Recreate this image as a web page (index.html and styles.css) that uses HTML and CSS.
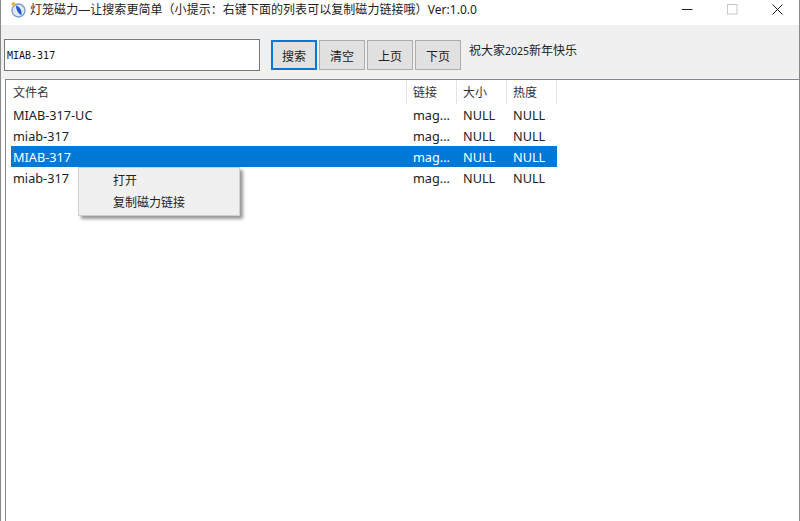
FILE: index.html
```html
<!DOCTYPE html>
<html lang="zh-CN">
<head>
<meta charset="utf-8">
<title>灯笼磁力</title>
<link rel="stylesheet" href="styles.css">
</head>
<body>
<div class="window">
  <header class="titlebar">
    <svg class="app-icon" width="18" height="18" viewBox="0 0 18 18">
      <circle cx="9.500" cy="9.500" r="6.500" fill="#dfe8f6" stroke="#7f9fd0" stroke-width="1.400"/>
      <path d="M7 4.500c3.500 1 6 4.500 5.500 9.500-3-1-5.500-5-5.500-9.500z" fill="#2456c4"/>
      <circle cx="4.500" cy="3" r="2" fill="#f0b040"/>
    </svg>
    <span class="title">灯笼磁力—让搜索更简单（小提示：右键下面的列表可以复制磁力链接哦）Ver:1.0.0</span>
    <div class="controls">
      <svg class="ctl" width="11" height="11" viewBox="0 0 11 11"><path d="M0 5.500h10.500" stroke="#222" stroke-width="1"/></svg>
      <svg class="ctl" width="11" height="11" viewBox="0 0 11 11"><rect x=".5" y=".5" width="9.500" height="9.500" fill="none" stroke="#c8c8c8"/></svg>
      <svg class="ctl" width="11" height="11" viewBox="0 0 11 11"><path d="M.5 .5l10 10M10.500 .5l-10 10" stroke="#222" stroke-width="1"/></svg>
    </div>
  </header>
  <div class="toolbar">
    <div class="search">MIAB-317</div>
    <div class="buttons">
      <button class="btn focused">搜索</button>
      <button class="btn">清空</button>
      <button class="btn">上页</button>
      <button class="btn">下页</button>
    </div>
    <span class="greeting">祝大家<span class="digits">2025</span>新年快乐</span>
  </div>
  <main class="list">
    <div class="row head">
      <span class="col name">文件名</span><span class="col">链接</span><span class="col">大小</span><span class="col">热度</span>
    </div>
    <div class="row"><span class="col name">MIAB-317-UC</span><span class="col">mag...</span><span class="col">NULL</span><span class="col">NULL</span></div>
    <div class="row"><span class="col name">miab-317</span><span class="col">mag...</span><span class="col">NULL</span><span class="col">NULL</span></div>
    <div class="row selected"><span class="col name">MIAB-317</span><span class="col">mag...</span><span class="col">NULL</span><span class="col">NULL</span></div>
    <div class="row"><span class="col name">miab-317</span><span class="col">mag...</span><span class="col">NULL</span><span class="col">NULL</span></div>
    <div class="menu">
      <div class="menu-item">打开</div>
      <div class="menu-item">复制磁力链接</div>
    </div>
  </main>
</div>
</body>
</html>
```
FILE: styles.css
```css
* { box-sizing: border-box; }
html, body { margin: 0; height: 100%; overflow: hidden; background: #fff; }
body { font-family: "Noto Sans", "Noto Sans CJK SC", sans-serif; color: #222; }
.window { height: 100vh; display: flex; flex-direction: column; border-left: 1px solid #8a8a8a; border-right: 1px solid #8a8a8a; }
.titlebar { height: 25px; flex: none; display: flex; align-items: flex-start; background: #fff; padding-left: 8px; }
.app-icon { flex: none; margin: 1px 3px 0 0; }
.title { font-size: 12px; line-height: 20px; letter-spacing: .05px; white-space: nowrap; color: #222; }
.controls { margin-left: auto; display: flex; gap: 34px; padding: 4px 16px 0 0; }
.ctl { display: block; }
.toolbar { height: 54px; flex: none; display: flex; align-items: flex-start; background: #f0f0f0; padding: 14px 0 0 3px; }
.search { width: 256px; height: 32px; background: #fff; border: 1px solid #7a7a7a; display: flex; align-items: center; padding-left: 2px; font: 10px "DejaVu Sans Mono", monospace; color: #111; }
.buttons { display: flex; gap: 2px; margin: 1px 0 0 11px; }
.btn { width: 46px; height: 30px; padding: 1px 0 0; border: 1px solid #adadad; background: #e1e1e1; font: 12px "Noto Sans CJK SC", sans-serif; color: #222; }
.btn.focused { border: 2px solid #0078d7; }
.greeting { margin-left: 8px; font-size: 12px; line-height: 20px; margin-top: 2px; }
.digits { font-size: 10.500px; }
.list { position: relative; flex: 1; margin-left: 4px; padding-left: 5px; background: #fff; border-top: 1px solid #828790; border-left: 1px solid #828790; }
.row { display: grid; grid-template-columns: 396px repeat(3, 50px); width: 546px; height: 21px; align-items: center; font-size: 12.700px; }
.row.head { height: 24px; font-size: 12px; color: #333; }
.row.head .col { height: 100%; display: flex; align-items: center; border-right: 1px solid #e5e5e5; }
.col { padding-left: 6px; overflow: hidden; white-space: nowrap; }
.col.name { padding-left: 2px; }
.selected { background: #0078d7; color: #fff; }
.menu { position: absolute; left: 72px; top: 87px; width: 162px; height: 49px; padding-top: 2px; background: #f0f0f0; border: 1px solid #d0d0d0; box-shadow: 3px 3px 3px rgba(0,0,0,.4); font-size: 12px; }
.menu-item { height: 22px; line-height: 22px; padding-left: 34px; }
```
